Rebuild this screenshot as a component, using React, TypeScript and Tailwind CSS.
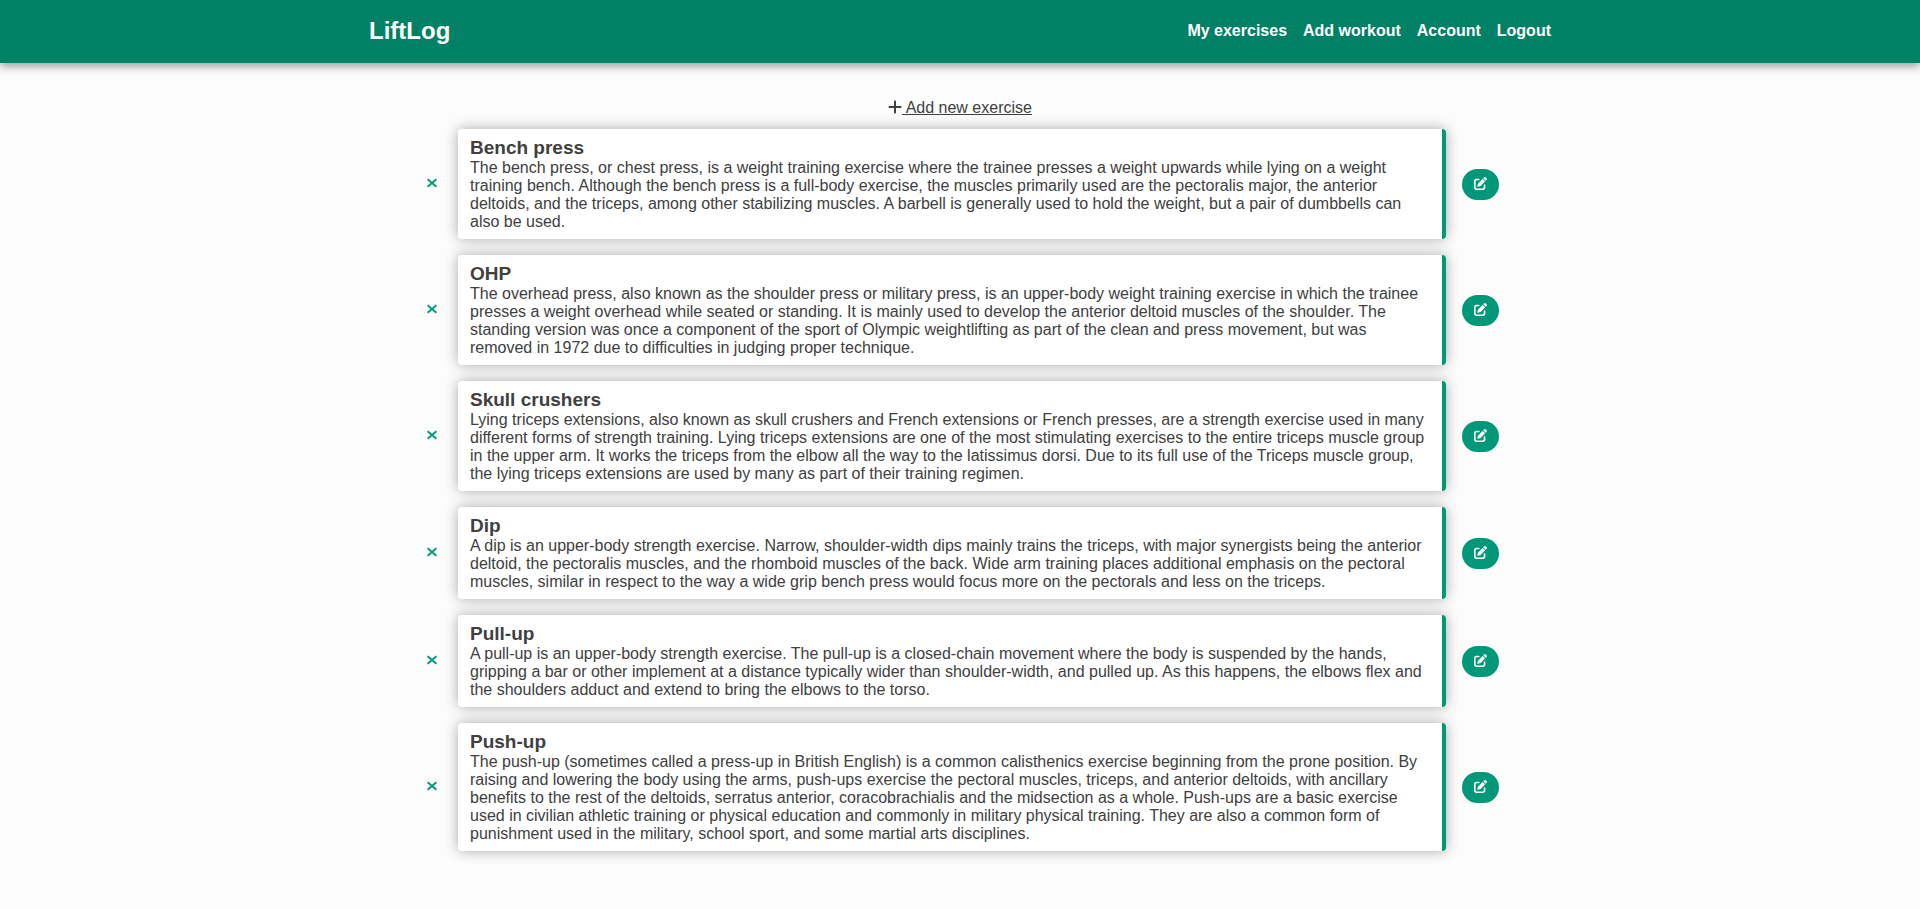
import { FaPenToSquare, FaPlus } from "react-icons/fa6";

const links = ["My exercises", "Add workout", "Account", "Logout"];

const exercises = [
  {
    name: "Bench press",
    description:
      "The bench press, or chest press, is a weight training exercise where the trainee presses a weight upwards while lying on a weight training bench. Although the bench press is a full-body exercise, the muscles primarily used are the pectoralis major, the anterior deltoids, and the triceps, among other stabilizing muscles. A barbell is generally used to hold the weight, but a pair of dumbbells can also be used.",
  },
  {
    name: "OHP",
    description:
      "The overhead press, also known as the shoulder press or military press, is an upper-body weight training exercise in which the trainee presses a weight overhead while seated or standing. It is mainly used to develop the anterior deltoid muscles of the shoulder. The standing version was once a component of the sport of Olympic weightlifting as part of the clean and press movement, but was removed in 1972 due to difficulties in judging proper technique.",
  },
  {
    name: "Skull crushers",
    description:
      "Lying triceps extensions, also known as skull crushers and French extensions or French presses, are a strength exercise used in many different forms of strength training. Lying triceps extensions are one of the most stimulating exercises to the entire triceps muscle group in the upper arm. It works the triceps from the elbow all the way to the latissimus dorsi. Due to its full use of the Triceps muscle group, the lying triceps extensions are used by many as part of their training regimen.",
  },
  {
    name: "Dip",
    description:
      "A dip is an upper-body strength exercise. Narrow, shoulder-width dips mainly trains the triceps, with major synergists being the anterior deltoid, the pectoralis muscles, and the rhomboid muscles of the back. Wide arm training places additional emphasis on the pectoral muscles, similar in respect to the way a wide grip bench press would focus more on the pectorals and less on the triceps.",
  },
  {
    name: "Pull-up",
    description:
      "A pull-up is an upper-body strength exercise. The pull-up is a closed-chain movement where the body is suspended by the hands, gripping a bar or other implement at a distance typically wider than shoulder-width, and pulled up. As this happens, the elbows flex and the shoulders adduct and extend to bring the elbows to the torso.",
  },
  {
    name: "Push-up",
    description:
      "The push-up (sometimes called a press-up in British English) is a common calisthenics exercise beginning from the prone position. By raising and lowering the body using the arms, push-ups exercise the pectoral muscles, triceps, and anterior deltoids, with ancillary benefits to the rest of the deltoids, serratus anterior, coracobrachialis and the midsection as a whole. Push-ups are a basic exercise used in civilian athletic training or physical education and commonly in military physical training. They are also a common form of punishment used in the military, school sport, and some martial arts disciplines.",
  },
];

function Header() {
  return (
    <header className="bg-[#008064] text-white shadow-[0_4px_8px_rgba(0,0,0,0.35)]">
      <div className="mx-auto flex max-w-[1198px] items-center justify-between px-2 pt-[15px] pb-[17px] font-bold">
        <a href="#" className="text-2xl leading-[31px]">
          LiftLog
        </a>
        <nav className="flex gap-4 leading-[18px]">
          {links.map((link) => (
            <a key={link} href="#">
              {link}
            </a>
          ))}
        </nav>
      </div>
    </header>
  );
}

function ExerciseRow({ name, description }: { name: string; description: string }) {
  return (
    <li className="flex items-center gap-4">
      <button
        type="button"
        aria-label={`Delete ${name}`}
        className="flex h-[31px] w-[21px] shrink-0 items-center justify-center pb-[2px] text-[#009879]"
      >
        <svg viewBox="0 0 12 10" className="h-[10px] w-[12px]" fill="none" stroke="currentColor" strokeWidth="1.9">
          <path d="M1.6 1.3 10.4 8.7M10.4 1.3 1.6 8.7" />
        </svg>
      </button>
      <article className="flex-1 rounded-sm border-r-4 border-[#009879] bg-white px-3 py-2 shadow-[0_0_14px_rgba(0,0,0,0.33)]">
        <h2 className="text-[19px] leading-[22px] font-bold">{name}</h2>
        <p className="leading-[18px]">{description}</p>
      </article>
      <button
        type="button"
        aria-label={`Edit ${name}`}
        className="flex h-[31px] w-[37px] shrink-0 items-center justify-center rounded-full bg-[#009879] pb-[2px] text-white"
      >
        <FaPenToSquare className="size-[13px]" />
      </button>
    </li>
  );
}

export default function App() {
  return (
    <div className="min-h-screen bg-[#fcfcfc] font-['Liberation_Sans',Arial,sans-serif] text-base text-[#404040]">
      <Header />
      <main className="mx-auto max-w-[1078px] pt-9 pb-12">
        <div className="flex justify-center leading-[18px]">
          <a href="#" className="flex">
            <FaPlus className="w-[14px]" />
            <span className="whitespace-pre underline"> Add new exercise</span>
          </a>
        </div>
        <ul className="mt-3 flex flex-col gap-4">
          {exercises.map((exercise) => (
            <ExerciseRow key={exercise.name} {...exercise} />
          ))}
        </ul>
      </main>
    </div>
  );
}
